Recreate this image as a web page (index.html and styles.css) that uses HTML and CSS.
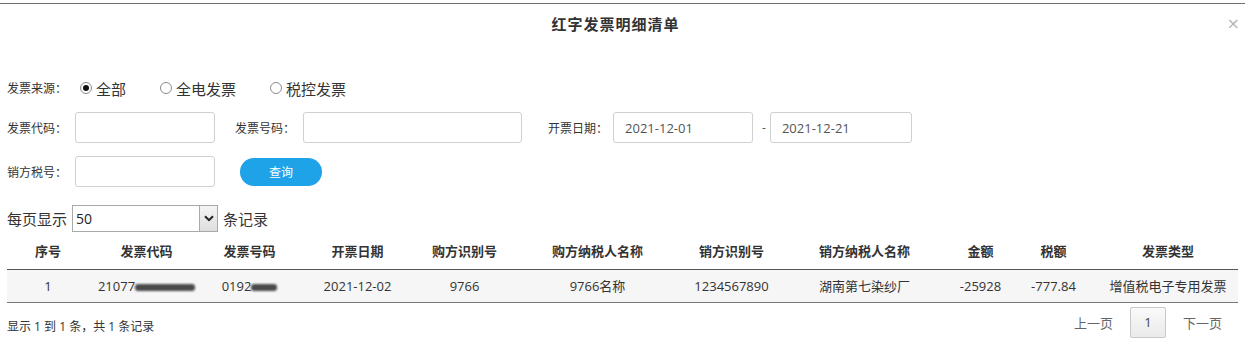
FILE: index.html
```html
<!DOCTYPE html>
<html lang="zh-CN">
<head>
    <meta charset="UTF-8">
    <meta name="viewport" content="width=device-width, initial-scale=1.0">
    <title>红字发票明细清单</title>
    <link rel="stylesheet" href="styles.css">
</head>
<body>
    <div class="dialog">
        <div class="dialog-head">
            <h3>红字发票明细清单</h3>
            <span class="close">&times;</span>
        </div>

        <div class="filters">
            <div class="radio-row">
                <span class="label">发票来源：</span>
                <label class="radio checked"><i class="dot"></i>全部</label>
                <label class="radio"><i class="dot"></i>全电发票</label>
                <label class="radio"><i class="dot"></i>税控发票</label>
            </div>
            <div class="field-row">
                <span class="label">发票代码：</span>
                <input class="text-input" type="text">
                <span class="label gap">发票号码：</span>
                <input class="text-input wide" type="text">
                <span class="label gap date-label">开票日期：</span>
                <input class="text-input" type="text" value="2021-12-01">
                <span class="dash">-</span>
                <input class="text-input date-end" type="text" value="2021-12-21">
            </div>
            <div class="field-row">
                <span class="label">销方税号：</span>
                <input class="text-input" type="text">
                <button class="btn-query">查询</button>
            </div>
        </div>

        <div class="page-size">
            每页显示
            <div class="select">
                <span class="select-value">50</span>
                <span class="select-arrow">
                    <svg width="10" height="7" viewBox="0 0 10 7"><path d="M1 1.2 L5 5.2 L9 1.2" fill="none" stroke="#222" stroke-width="2"/></svg>
                </span>
            </div>
            条记录
        </div>

        <table class="grid">
            <colgroup>
                <col style="width:82px"><col style="width:115px"><col style="width:91px"><col style="width:125px">
                <col style="width:89px"><col style="width:177px"><col style="width:91px"><col style="width:175px">
                <col style="width:57px"><col style="width:89px"><col style="width:140px">
            </colgroup>
            <thead>
                <tr>
                    <th>序号</th><th>发票代码</th><th>发票号码</th><th>开票日期</th><th>购方识别号</th><th>购方纳税人名称</th>
                    <th>销方识别号</th><th>销方纳税人名称</th><th>金额</th><th>税额</th><th>发票类型</th>
                </tr>
            </thead>
            <tbody>
                <tr>
                    <td>1</td>
                    <td>21077<i class="smudge long"></i></td>
                    <td>0192<i class="smudge short"></i></td>
                    <td>2021-12-02</td>
                    <td>9766</td>
                    <td>9766名称</td>
                    <td>1234567890</td>
                    <td>湖南第七染纱厂</td>
                    <td>-25928</td>
                    <td>-777.84</td>
                    <td>增值税电子专用发票</td>
                </tr>
            </tbody>
        </table>

        <div class="table-foot">
            <span class="summary">显示 1 到 1 条，共 1 条记录</span>
            <div class="pager">
                <span class="pager-link">上一页</span>
                <span class="pager-num">1</span>
                <span class="pager-link">下一页</span>
            </div>
        </div>
    </div>
</body>
</html>
```

FILE: styles.css
```css
* {
    box-sizing: border-box;
    margin: 0;
    padding: 0;
}
body {
    font-family: "Open Sans", "Noto Sans CJK SC", sans-serif;
    background-color: #fff;
    color: #333;
    font-size: 12px;
}
.dialog {
    margin-top: 3px;
    border-top: 1px solid #6f6f6f;
    padding: 0 7px;
}
.dialog-head {
    position: relative;
    height: 40px;
    padding-right: 14px;
    text-align: center;
}
.dialog-head h3 {
    font-size: 15px;
    font-weight: bold;
    line-height: 40px;
    letter-spacing: 1px;
    color: #333;
}
.close {
    position: absolute;
    top: 8px;
    right: -1px;
    font-size: 20px;
    line-height: 24px;
    color: #b5b5b5;
}
.filters {
    padding-top: 34px;
}
.radio-row {
    display: flex;
    align-items: center;
    height: 20px;
    margin-bottom: 14px;
}
.label {
    font-size: 12px;
    color: #333;
    margin-right: 8px;
    white-space: nowrap;
}
.radio-row .label {
    margin-right: 13px;
}
.radio {
    display: flex;
    align-items: center;
    font-size: 15px;
    color: #333;
    margin-right: 34px;
}
.radio .dot {
    width: 12px;
    height: 12px;
    border: 1px solid #8c8c8c;
    border-radius: 50%;
    margin-right: 4px;
    display: flex;
    align-items: center;
    justify-content: center;
}
.radio.checked .dot::after {
    content: "";
    width: 6px;
    height: 6px;
    border-radius: 50%;
    background: #111;
}
.field-row {
    display: flex;
    align-items: center;
    height: 31px;
    margin-bottom: 13px;
}
.text-input {
    width: 140px;
    height: 31px;
    border: 1px solid #d0d0d0;
    border-radius: 3px;
    padding: 0 11px;
    font-family: inherit;
    font-size: 13px;
    color: #555;
    outline: none;
}
.text-input.wide {
    width: 219px;
}
.text-input.date-end {
    width: 142px;
}
.label.gap {
    margin-left: 20px;
}
.label.date-label {
    margin-left: 26px;
    margin-right: 5px;
}
.dash {
    margin: 0 4px 0 9px;
    color: #555;
    font-size: 12px;
}
.btn-query {
    width: 82px;
    height: 28px;
    margin-left: 25px;
    border: none;
    border-radius: 14px;
    background-color: #1ea3e8;
    color: #fff;
    font-family: inherit;
    font-size: 12px;
}
.page-size {
    display: flex;
    align-items: center;
    font-size: 15px;
    color: #333;
    margin-top: 18px;
    height: 27px;
}
.select {
    display: flex;
    width: 146px;
    height: 27px;
    margin: 0 5px 0 5px;
    border: 1px solid #a9a9a9;
    background: #fff;
}
.select-value {
    flex: 1;
    font-size: 14px;
    line-height: 25px;
    padding-left: 3px;
    color: #222;
}
.select-arrow {
    width: 18px;
    border-left: 1px solid #a9a9a9;
    background: linear-gradient(#f4f4f4, #dedede);
    display: flex;
    align-items: center;
    justify-content: center;
}
.grid {
    width: 1231px;
    border-collapse: collapse;
    table-layout: fixed;
    font-size: 13px;
}
.grid th {
    height: 37px;
    font-weight: bold;
    color: #333;
    border-bottom: 1px solid #555;
    text-align: center;
}
.grid td {
    height: 33px;
    background-color: #f6f6f6;
    color: #333;
    text-align: center;
    border-bottom: 1px solid #777;
    white-space: nowrap;
}
.smudge {
    display: inline-block;
    height: 7px;
    background: #4a4a4a;
    filter: blur(1px);
    vertical-align: middle;
    border-radius: 3px;
}
.smudge.long {
    width: 60px;
}
.smudge.short {
    width: 26px;
}
.table-foot {
    display: flex;
    justify-content: space-between;
    align-items: center;
    height: 38px;
    padding-top: 2px;
}
.summary {
    font-size: 12px;
    color: #333;
    margin-top: 6px;
}
.pager {
    display: flex;
    align-items: center;
    padding-right: 16px;
}
.pager-link {
    font-size: 13px;
    color: #666;
}
.pager-num {
    width: 36px;
    height: 31px;
    margin: 0 17px;
    border: 1px solid #c8c8c8;
    border-radius: 2px;
    background: linear-gradient(#fafafa, #eaeaea);
    font-size: 13px;
    color: #444;
    line-height: 29px;
    text-align: center;
}
```
